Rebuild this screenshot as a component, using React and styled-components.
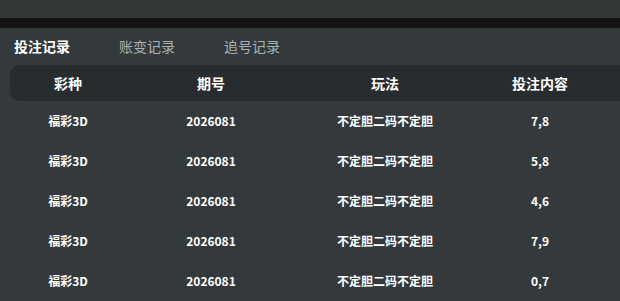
import React from 'react';
import styled, {createGlobalStyle} from 'styled-components';

const GlobalStyle = createGlobalStyle`
  html, body {
    margin: 0;
    padding: 0;
    background: #343a3b;
    overflow: hidden;
  }
  body {
    font-family: "Noto Sans CJK SC", "Noto Sans", sans-serif;
  }
`;

const Page = styled.div`
  width: 620px;
  height: 301px;
  background: #343a3b;
  overflow: hidden;
`;

const TopBand = styled.div`
  height: 18px;
  background: #333839;
`;

const Divider = styled.div`
  height: 10px;
  background: #141414;
`;

const Tabs = styled.div`
  display: flex;
  align-items: center;
  height: 37px;
  padding-left: 14px;
  gap: 49px;
`;

const Tab = styled.span`
  font-size: 14px;
  line-height: 20px;
  margin-top: -2px;
  font-weight: ${p => (p.$active ? 700 : 400)};
  color: ${p => (p.$active ? '#ffffff' : '#a9b0b3')};
`;

const Table = styled.div`
  padding-left: 10px;
  width: 700px;
`;

const HeadRow = styled.div`
  display: grid;
  grid-template-columns: 116px 170px 178px 132px 1fr;
  height: 36px;
  align-items: center;
  background: #282c2e;
  border-radius: 10px 0 0 10px;
`;

const Row = styled.div`
  display: grid;
  grid-template-columns: 116px 170px 178px 132px 1fr;
  height: 40px;
  align-items: center;
`;

const Th = styled.div`
  text-align: center;
  color: #ffffff;
  font-size: 14px;
  font-weight: 700;
`;

const Td = styled.div`
  text-align: center;
  color: #ffffff;
  font-size: 12px;
  font-weight: 700;
  padding-bottom: 2px;
`;

const rows = ['7,8', '5,8', '4,6', '7,9', '0,7'];

export default function App() {
  return (
    <Page>
      <GlobalStyle />
      <TopBand />
      <Divider />
      <Tabs>
        <Tab $active>投注记录</Tab>
        <Tab>账变记录</Tab>
        <Tab>追号记录</Tab>
      </Tabs>
      <Table>
        <HeadRow>
          <Th>彩种</Th>
          <Th>期号</Th>
          <Th>玩法</Th>
          <Th>投注内容</Th>
          <Th />
        </HeadRow>
        {rows.map((r, i) => (
          <Row key={i}>
            <Td>福彩3D</Td>
            <Td>2026081</Td>
            <Td>不定胆二码不定胆</Td>
            <Td>{r}</Td>
            <Td />
          </Row>
        ))}
      </Table>
    </Page>
  );
}
